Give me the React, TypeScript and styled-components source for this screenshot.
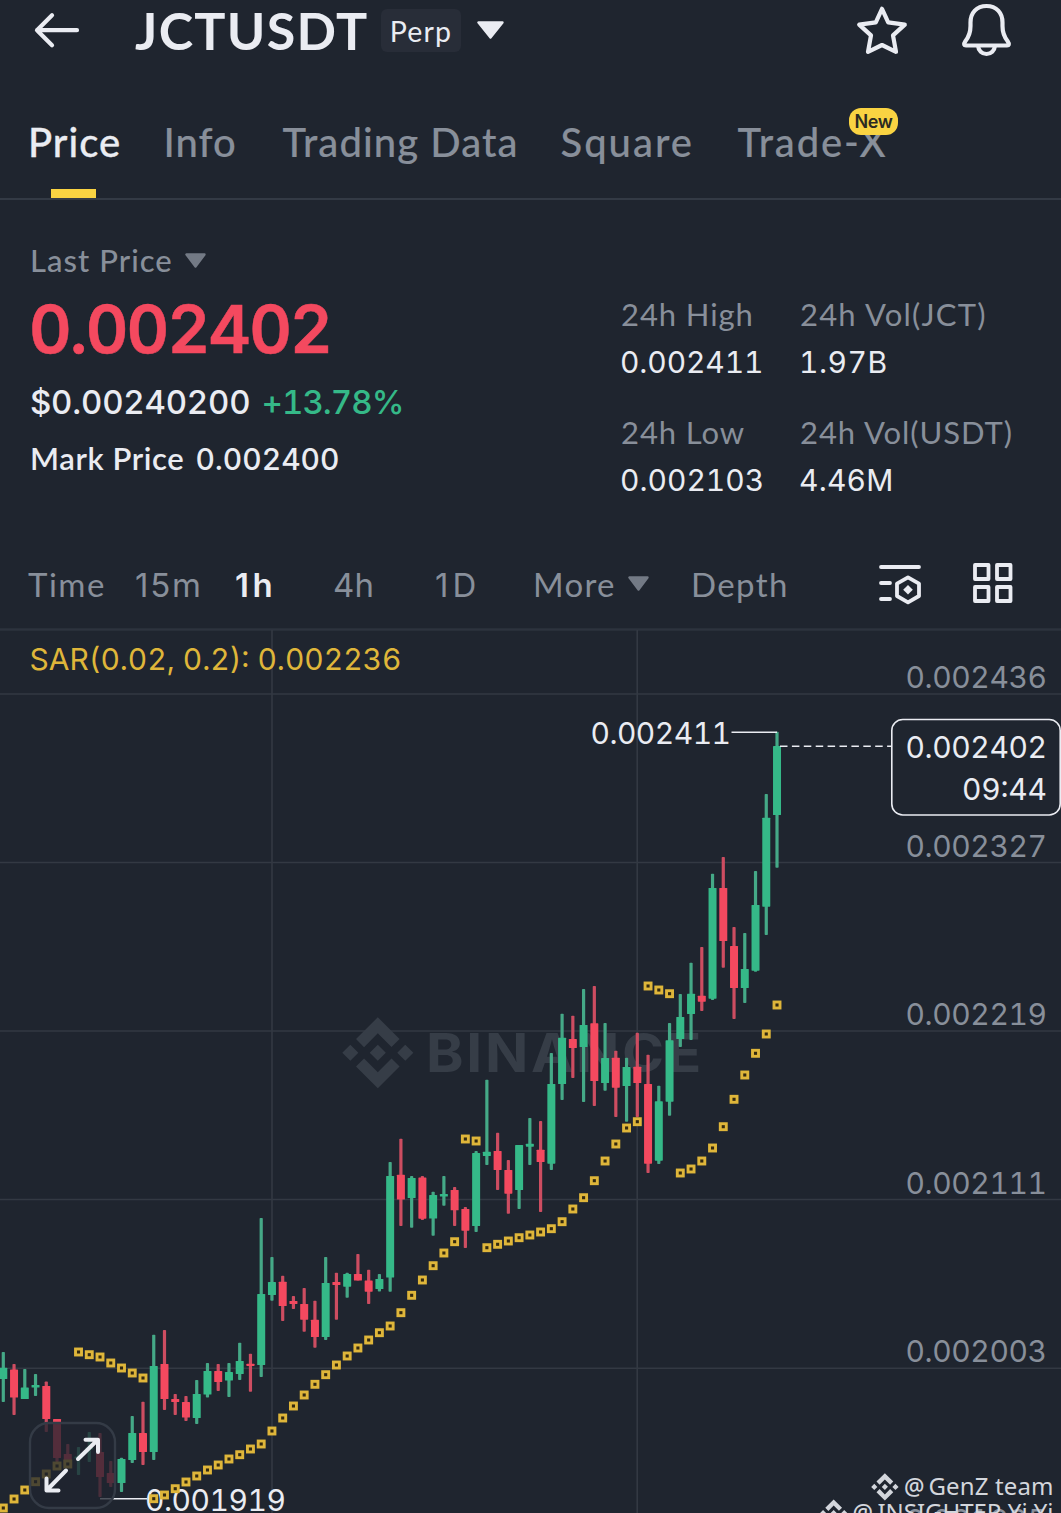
import React from 'react';
import styled, { createGlobalStyle, css } from 'styled-components';

const c = {
  bg: '#1f252f',
  text: '#eaecf2',
  muted: '#888f9a',
  line: '#333a45',
  green: '#35b988',
  greenWick: '#45a987',
  red: '#f4495f',
  redWick: '#cd4d61',
  yellow: '#f9d342',
  sar: '#dfb63a',
};

const WORDS = "Lato, 'Open Sans', sans-serif";
const DIGITS = "Inter, Roboto, sans-serif";

const GlobalStyle = createGlobalStyle`
  html, body { margin: 0; background: ${c.bg}; }
  body { width: 1061px; height: 1513px; overflow: hidden; }
  * { box-sizing: border-box; }
`;

const Screen = styled.main`
  width: 1061px;
  height: 1513px;
  overflow: hidden;
  display: flex;
  flex-direction: column;
  background: ${c.bg};
  color: ${c.text};
  font-family: ${WORDS};
  white-space: nowrap;
`;

const Header = styled.header`
  height: 60px;
  display: flex;
  align-items: center;
  padding: 0 48px 0 33px;
`;

const Symbol = styled.h1`
  margin: 0 0 0 54px;
  width: 246px;
  font-size: 52px;
  line-height: 60px;
  font-weight: 700;
  letter-spacing: 1.3px;
`;

const ContractTag = styled.span`
  width: 80px;
  height: 43px;
  border-radius: 6px;
  background: #282d38;
  font-size: 28.5px;
  line-height: 44px;
  text-align: center;
  letter-spacing: 1.2px;
  margin-right: 16px;
`;

const HeaderActions = styled.div`
  margin-left: auto;
  display: flex;
  align-items: center;
  gap: 53px;
`;

const Tabs = styled.nav`
  height: 140px;
  padding: 58px 0 0 28px;
  border-bottom: 2px solid ${c.line};
  display: grid;
  grid-template-columns: 135.5px 119px 278px 177px 1fr;
`;

const Tab = styled.div<{ $active?: boolean; $track: number }>`
  position: relative;
  font-size: 40px;
  line-height: 48px;
  font-weight: 500;
  -webkit-text-stroke: ${(p) => (p.$active ? 0.3 : 0.15)}px currentColor;
  letter-spacing: ${(p) => p.$track}px;
  color: ${(p) => (p.$active ? c.text : c.muted)};
  ${(p) =>
    p.$active &&
    css`
      &::after {
        content: '';
        display: block;
        width: 45px;
        height: 9px;
        margin: 23px 0 0 23px;
        background: ${c.yellow};
      }
    `}
`;

const NewBadge = styled.span`
  position: absolute;
  left: 111.5px;
  top: -10px;
  width: 49px;
  height: 27px;
  border-radius: 12px;
  background: ${c.yellow};
  color: #2b2a22;
  font: 600 18px/27px ${DIGITS};
  letter-spacing: -0.4px;
  text-align: center;
  -webkit-text-stroke: 0;
`;

const Summary = styled.section`
  height: 340px;
  display: flex;
  padding: 42px 0 0 30px;
`;

const PriceColumn = styled.div`
  width: 591px;
  display: flex;
  flex-direction: column;
`;

const PriceKind = styled.div`
  display: flex;
  align-items: center;
  gap: 12px;
  color: ${c.muted};
  font-size: 31px;
  line-height: 36px;
  letter-spacing: 1.05px;
  font-weight: 500;
`;

const LastPrice = styled.div`
  margin: 11px 0 0 -1px;
  font: 600 66px/80px ${DIGITS};
  font-feature-settings: 'tnum';
  letter-spacing: -1.85px;
  -webkit-text-stroke: 0.5px currentColor;
  color: ${c.red};
`;

const FiatRow = styled.div`
  margin-top: 13px;
  display: flex;
  gap: 11px;
  font: 500 33px/40px ${DIGITS};
  font-feature-settings: 'tnum';
  letter-spacing: -0.2px;
`;

const Change = styled.span`
  color: ${c.green};
  letter-spacing: -0.9px;
`;

const MarkRow = styled.div`
  margin-top: 17px;
  display: flex;
  gap: 11px;
  font-size: 31px;
  line-height: 39px;
  font-weight: 600;
  letter-spacing: 0.6px;
`;

const Num = styled.span`
  font-family: ${DIGITS};
  font-feature-settings: 'tnum';
  font-size: 30px;
  line-height: 41px;
  font-weight: 500;
  letter-spacing: 0;
`;

const Stats = styled.dl`
  margin: 52px 0 0;
  display: grid;
  grid-template-columns: 179px 1fr;
  grid-auto-rows: 118px;
`;

const Stat = styled.div`
  display: flex;
  flex-direction: column;
`;

const StatLabel = styled.dt<{ $track: number }>`
  color: ${c.muted};
  font-size: 31px;
  line-height: 40px;
  letter-spacing: ${(p) => p.$track}px;
`;

const StatValue = styled.dd<{ $track: number }>`
  margin: 8px 0 0 -1px;
  font: 400 30px/41px ${DIGITS};
  font-feature-settings: 'tnum';
  letter-spacing: ${(p) => p.$track}px;
`;

const Intervals = styled.div`
  height: 88px;
  padding-left: 28px;
  display: grid;
  grid-template-columns: 107px 100px 98px 102px 98px 158px 187px 94px 1fr;
  align-items: center;
`;

const Interval = styled.div<{ $active?: boolean; $digits?: boolean; $track: number }>`
  display: flex;
  align-items: center;
  gap: 12px;
  font-family: ${(p) => (p.$digits ? DIGITS : WORDS)};
  font-size: 33px;
  line-height: 40px;
  padding-top: ${(p) => (p.$digits ? 1 : 0)}px;
  font-weight: ${(p) => (p.$active ? 600 : 400)};
  letter-spacing: ${(p) => p.$track}px;
  color: ${(p) => (p.$active ? c.text : c.muted)};
  svg { margin-bottom: 2px; }
`;

const ChartPanel = styled.section`
  height: 885px;
  svg { display: block; }
`;

type Candle = [number, number, number, number, 0 | 1];

/* high, body top, body bottom, low, rising */
const candles: Candle[] = [
  [1352, 1367.7, 1379, 1402, 1], [1364, 1369.5, 1397.5, 1415, 0], [1369, 1387.5, 1399, 1399, 1],
  [1374, 1385, 1387.5, 1396, 1], [1381.5, 1386, 1419, 1432, 0], [1419, 1419, 1458, 1462, 0],
  [1444, 1454, 1465, 1468, 0], [1447, 1456.5, 1458.5, 1475, 1], [1432, 1447.5, 1449.5, 1462, 1],
  [1433, 1452, 1477, 1497, 0], [1461, 1473, 1483, 1487, 0], [1457.7, 1459, 1483, 1492, 1],
  [1416, 1433, 1460, 1463, 1], [1401.7, 1433, 1452, 1465, 0], [1334.7, 1366, 1452, 1460, 1],
  [1330, 1364, 1399, 1410, 0], [1394, 1399, 1402, 1415, 0], [1396, 1402, 1417.5, 1421, 0],
  [1380, 1394, 1418, 1424, 1], [1363, 1371, 1394.5, 1397.5, 1], [1364, 1371, 1382, 1391, 0],
  [1363, 1372, 1380.5, 1397, 1], [1342.7, 1361, 1374, 1380, 1], [1353.7, 1363.7, 1366, 1391.7, 0],
  [1218, 1294, 1365, 1377, 1], [1257, 1282, 1295, 1300.7, 1], [1275.7, 1281.7, 1306, 1321, 0],
  [1296, 1301, 1304, 1309, 0], [1288, 1304, 1319.7, 1331.7, 0], [1300.7, 1319.7, 1337, 1347.7, 0],
  [1257, 1283, 1337, 1340, 1], [1272.7, 1282, 1285, 1319.7, 0], [1272.7, 1274, 1286.7, 1297.7, 1],
  [1254, 1274, 1280.5, 1280.5, 0], [1269.7, 1280.5, 1291.7, 1304, 0], [1274, 1279, 1289, 1291.5, 1],
  [1162, 1176, 1277.5, 1291.7, 1], [1138.7, 1174.7, 1199.5, 1226, 0], [1176, 1178, 1198, 1227.7, 1],
  [1176, 1177.5, 1218.7, 1220, 0], [1191.7, 1195, 1218.5, 1235.7, 1], [1176, 1194, 1196.5, 1205.7, 1],
  [1187, 1190, 1210.3, 1226, 0], [1207, 1209, 1230.7, 1248, 0], [1151, 1153, 1226, 1232, 1],
  [1079.7, 1151.7, 1156, 1165, 1], [1132.7, 1151, 1170, 1190, 0], [1160, 1170, 1193.7, 1213.7, 0],
  [1145, 1145, 1190, 1209, 1], [1118, 1143.7, 1146.7, 1165, 1], [1121, 1149.7, 1162, 1212, 0],
  [1053, 1084, 1163.7, 1170, 1], [1013.7, 1037.7, 1084, 1100, 1], [1015.7, 1039, 1048, 1078, 0],
  [989, 1025, 1047, 1102, 1], [986, 1023.3, 1081, 1106, 0], [1023, 1058, 1083, 1090.7, 1],
  [1050.7, 1057.7, 1087.7, 1117, 0], [1057.7, 1067, 1086, 1121.7, 1], [1032.7, 1066.7, 1083, 1117, 0],
  [1054.7, 1084, 1163.7, 1173, 0], [1085.7, 1101.3, 1160.7, 1164, 1], [1023, 1040.3, 1101.7, 1115.7, 1],
  [994, 1017, 1039, 1047, 1], [962.7, 993.7, 1014, 1040, 1], [947, 995.7, 1001.7, 1011, 0],
  [873.7, 888, 998.7, 1000, 1], [857, 888, 941, 967.7, 0], [927, 946, 988, 1019, 0],
  [933, 969, 988, 1003, 1], [871, 905, 970.7, 971.7, 1], [794, 817.7, 906.7, 935, 1],
  [731.7, 746, 815, 867.7, 1],
];

const sar = [
  1508, 1499, 1490, 1481.7, 1474, 1466, 1464, 1352, 1354.7, 1357, 1363, 1368, 1373, 1378, 1498.7,
  1495, 1488.7, 1482, 1476, 1470, 1465, 1459, 1454.7, 1449, 1444, 1431, 1418, 1406, 1395, 1384.3,
  1374.7, 1365, 1356, 1348, 1340, 1332.7, 1326, 1312.7, 1295.3, 1280, 1265.7, 1253, 1241.7, 1139,
  1141, 1247.7, 1244.3, 1241, 1237.7, 1235, 1232, 1228.7, 1221.7, 1209, 1197.7, 1180.7, 1161, 1144,
  1128, 1121.7, 986, 990, 993.7, 1173, 1169, 1161, 1148, 1126.7, 1099.3, 1075, 1053.3, 1034, 1005,
];

const xAt = (i: number) => 3.3 + i * 10.746;

const axis: [string, number][] = [
  ['0.002436', 688], ['0.002327', 857], ['0.002219', 1025], ['0.002111', 1194],
  ['0.002003', 1362], ['0.001895', 1531],
];

const BINANCE_MARK =
  'M16.624 13.9202l2.7175 2.7154-7.353 7.353-7.353-7.352 2.7175-2.7164 4.6355 4.6595 4.6356-4.6595zm4.6366-4.6366L24 12l-2.7154 2.7164L18.5682 12l2.6924-2.7164zm-9.272.001l2.7163 2.6914-2.7164 2.7174v-.001L9.2721 12l2.7164-2.7154zm-9.2722-.001L5.4088 12l-2.6914 2.6924L0 12l2.7164-2.7164zM11.9885.0115l7.353 7.329-2.7174 2.7154-4.6356-4.6356-4.6355 4.6595-2.7174-2.7154 7.353-7.353z';

const ChartText = styled.text`
  font-family: ${DIGITS};
  font-size: 30px;
  font-feature-settings: 'tnum';
`;

const WatermarkText = styled.text`
  font-family: ${DIGITS};
  font-size: 53.5px;
  font-weight: 700;
  letter-spacing: 2.5px;
`;

const CreditText = styled.text`
  font-family: 'Noto Sans', sans-serif;
  font-size: 24px;
  fill: #d3d6dc;
`;

const Caret = ({ w, h, color }: { w: number; h: number; color: string }) => (
  <svg width={w} height={h} viewBox={`0 0 ${w} ${h}`}>
    <path
      d={`M1.5 1.5H${w - 1.5}L${w / 2} ${h - 1.5}Z`}
      fill={color}
      stroke={color}
      strokeWidth="2.4"
      strokeLinejoin="round"
    />
  </svg>
);

const Chart = () => (
  <svg width="1061" height="885" viewBox="0 628 1061 885">
    <g stroke="#333943" strokeWidth="1.6">
      <path d="M0 629.5H1061" stroke="#2d333e" strokeWidth="2.4" />
      {[694, 862.5, 1031, 1199.5, 1368.3].map((y) => (
        <path key={y} d={`M0 ${y}H1061`} />
      ))}
      <path d="M272 630V1513M637.2 630V1513" />
    </g>

    <g fill="#363d47">
      <path d={BINANCE_MARK} transform="translate(342.3 1017.3) scale(2.96)" />
      <WatermarkText x="426" y="1072" textLength="278" lengthAdjust="spacingAndGlyphs">
        BINANCE
      </WatermarkText>
    </g>

    {candles.map(([hi, top, bottom, lo, up], i) => (
      <g key={i}>
        <rect x={xAt(i) - 1.6} y={hi} width="3.2" height={lo - hi} rx="0.8" fill={up ? c.greenWick : c.redWick} />
        <rect x={xAt(i) - 4} y={top} width="8" height={bottom - top} rx="0.6" fill={up ? c.green : c.red} />
      </g>
    ))}

    <path d="M100 1498.7H147" stroke={c.text} strokeWidth="1.6" />
    <ChartText x="145" y="1511" fill={c.text} textLength="141">0.001919</ChartText>

    {sar.map((y, i) => (
      <rect key={i} x={xAt(i) - 3} y={y - 3} width="6" height="6" fill="#33290f" stroke={c.sar} strokeWidth="2.9" />
    ))}

    <rect x="30" y="1423" width="85" height="85" rx="19" fill={c.bg} fillOpacity="0.76" stroke="#343b46" strokeWidth="2.4" />
    <g fill="none" stroke={c.text} strokeWidth="4" strokeLinecap="round" strokeLinejoin="round">
      <path d="M78 1459L97.5 1440M85.5 1439.8H98V1452" />
      <path d="M66 1470.5L47 1490M46.5 1478.5V1490.5H58.5" />
    </g>

    <ChartText x="29.5" y="669.5" fill={c.sar} textLength="372">
      SAR(0.02, 0.2): 0.002236
    </ChartText>

    <ChartText x="590.5" y="744" fill={c.text} textLength="140.5">0.002411</ChartText>
    <path d="M731.5 732.3H777" stroke={c.text} strokeWidth="1.6" />
    <path d="M780 746.3H891" stroke={c.text} strokeWidth="1.6" strokeDasharray="7.5 4.4" />

    {axis.map(([label, y]) => (
      <ChartText key={label} x="905.5" y={y} fill={c.muted} textLength="141.5">{label}</ChartText>
    ))}

    <rect x="891.8" y="719.5" width="168.4" height="95.5" rx="11" fill={c.bg} stroke={c.text} strokeWidth="1.6" />
    <ChartText x="905.5" y="758" fill={c.text} textLength="141.5">0.002402</ChartText>
    <ChartText x="962" y="800" fill={c.text} textLength="85">09:44</ChartText>

    <g fill="#d3d6dc">
      <path d={BINANCE_MARK} transform="translate(871.2 1473.2) scale(1.14)" />
      <path d={BINANCE_MARK} transform="translate(820 1499.4) scale(1.14)" />
    </g>
    <CreditText x="904" y="1495" fontWeight="500" textLength="20.5" lengthAdjust="spacingAndGlyphs">@</CreditText>
    <CreditText x="928.5" y="1495" textLength="125">GenZ team</CreditText>
    <CreditText x="852.5" y="1521" fontWeight="500" textLength="20.5" lengthAdjust="spacingAndGlyphs">@</CreditText>
    <CreditText x="877.5" y="1521" textLength="176">INSIGHTER Yi Yi</CreditText>
  </svg>
);

const stats: [string, string, number, number][] = [
  ['24h High', '0.002411', 0.9, -0.1],
  ['24h Vol(JCT)', '1.97B', 1.2, 0.5],
  ['24h Low', '0.002103', 0.9, 0],
  ['24h Vol(USDT)', '4.46M', 0.95, 0.2],
];

export default function App() {
  return (
    <Screen>
      <GlobalStyle />
      <Header>
        <svg width="48" height="40" viewBox="0 0 48 40" fill="none" stroke={c.text} strokeWidth="4.2" strokeLinecap="round" strokeLinejoin="round">
          <path d="M4 20.2H44M19 5.2L4 20.2L19 35.2" />
        </svg>
        <Symbol>JCTUSDT</Symbol>
        <ContractTag>Perp</ContractTag>
        <Caret w={27} h={18} color={c.text} />
        <HeaderActions>
          <svg width="52" height="52" viewBox="0 0 52 52" fill="none" stroke={c.text} strokeWidth="4.2" strokeLinejoin="round">
            <path d="M26 4.8L32.2 18.3L48.8 20.6L37 31.4L40 47.8L26 41L12 47.8L15 31.4L3.2 20.6L19.8 18.3Z" />
          </svg>
          <svg width="52" height="56" viewBox="0 0 52 56" fill="none" stroke={c.text} strokeWidth="4.2" strokeLinejoin="round">
            <path d="M26 4C16 4 10 11 10 20.500V24C10 31 8.500 34.500 5 39C2.600 42.500 3.800 43.500 5.500 43.500H46.500C48.200 43.500 49.400 42.500 47 39C43.500 34.500 42 31 42 24V20.500C42 11 36 4 26 4Z" transform="translate(-0.5 0)" />
            <path d="M17 43.500C17.500 49 21 52 25.500 52C30 52 33.500 49 34 43.500" />
          </svg>
        </HeaderActions>
      </Header>

      <Tabs>
        <Tab $active $track={1}>Price</Tab>
        <Tab $track={1}>Info</Tab>
        <Tab $track={1.05}>Trading Data</Tab>
        <Tab $track={2}>Square</Tab>
        <Tab $track={1.8}>
          Trade-X
          <NewBadge>New</NewBadge>
        </Tab>
      </Tabs>

      <Summary>
        <PriceColumn>
          <PriceKind>
            Last Price
            <Caret w={21} h={15} color="#737a85" />
          </PriceKind>
          <LastPrice>0.002402</LastPrice>
          <FiatRow>
            <span>$0.00240200</span>
            <Change>+13.78%</Change>
          </FiatRow>
          <MarkRow>
            <span>Mark Price</span>
            <Num>0.002400</Num>
          </MarkRow>
        </PriceColumn>
        <Stats>
          {stats.map(([label, value, labelTrack, valueTrack]) => (
            <Stat key={label}>
              <StatLabel $track={labelTrack}>{label}</StatLabel>
              <StatValue $track={valueTrack}>{value}</StatValue>
            </Stat>
          ))}
        </Stats>
      </Summary>

      <Intervals>
        <Interval $track={1.5}>Time</Interval>
        <Interval $digits $track={1.8}>15m</Interval>
        <Interval $digits $active $track={3.5}>1h</Interval>
        <Interval $digits $track={0.3}>4h</Interval>
        <Interval $digits $track={4}>1D</Interval>
        <Interval $track={1.3}>
          More
          <Caret w={21} h={15} color="#737a85" />
        </Interval>
        <Interval $track={1.4}>Depth</Interval>
        <svg width="44" height="42" viewBox="0 0 44 42" fill="none" stroke={c.text} strokeWidth="3.8" strokeLinecap="round" strokeLinejoin="round">
          <path d="M3 4H41M3 20H12M3 36H12" />
          <path d="M30 14.3L41 20.6V33L30 39.4L19 33V20.6Z" />
          <path d="M30 21.9L34.8 26.7L30 31.5L25.2 26.7Z" fill={c.text} stroke="none" />
        </svg>
        <svg width="42" height="44" viewBox="0 0 42 44" fill="none" stroke={c.text} strokeWidth="3.8" strokeLinejoin="round">
          <path d="M3 3H16.500V17H3ZM25 3H38.500V17H25ZM3 25H16.500V39H3ZM25 25H38.500V39H25Z" />
        </svg>
      </Intervals>

      <ChartPanel>
        <Chart />
      </ChartPanel>
    </Screen>
  );
}
